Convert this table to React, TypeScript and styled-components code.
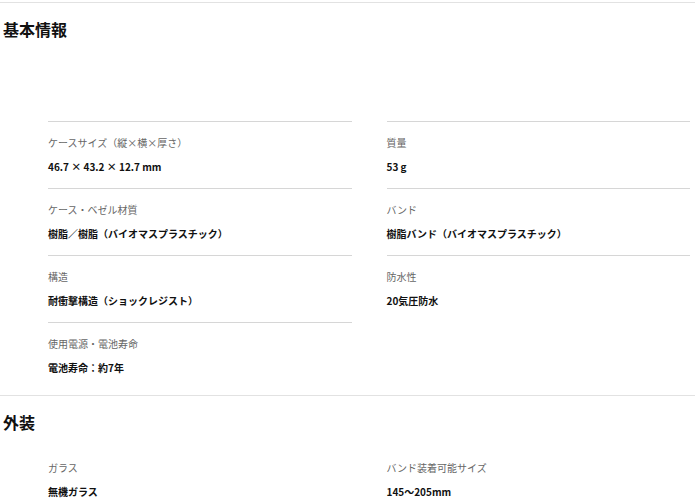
import styled, { createGlobalStyle } from "styled-components";

const GlobalStyle = createGlobalStyle`
  html, body {
    margin: 0;
    padding: 0;
    background: #fff;
  }
  body {
    font-family: "Noto Sans CJK JP", "Noto Sans", sans-serif;
    color: #111;
  }
`;

const Page = styled.div`
  width: 695px;
  padding-top: 2px;
`;

const Section = styled.section`
  border-top: 1px solid #e2e2e2;
  padding-bottom: 6px;
`;

const Heading = styled.h2`
  margin: 0;
  padding: 14px 0 0 3px;
  font-size: 16px;
  line-height: 24px;
  font-weight: 700;
  color: #111;
`;

const Grid = styled.dl<{ $top: number }>`
  margin: ${(p) => p.$top}px 0 0;
  padding: 0 5px 0 48px;
  display: grid;
  grid-template-columns: 1fr 1fr;
  column-gap: 35px;
`;

const Item = styled.div<{ $ruled?: boolean }>`
  border-top: 1px solid ${(p) => (p.$ruled ? "#d6d6d6" : "transparent")};
  padding: 13px 0 13px;
  display: flex;
  flex-direction: column;
  gap: 8px;
`;

const Label = styled.dt`
  margin: 0;
  font-size: 10px;
  line-height: 16px;
  color: #666;
`;

const Value = styled.dd`
  margin: 0;
  font-size: 10px;
  line-height: 16px;
  font-weight: 700;
  color: #111;
`;

type Spec = { label: string; value: string };

const basic: Spec[] = [
  { label: "ケースサイズ（縦×横×厚さ）", value: "46.7 × 43.2 × 12.7 mm" },
  { label: "質量", value: "53 g" },
  { label: "ケース・ベゼル材質", value: "樹脂／樹脂（バイオマスプラスチック）" },
  { label: "バンド", value: "樹脂バンド（バイオマスプラスチック）" },
  { label: "構造", value: "耐衝撃構造（ショックレジスト）" },
  { label: "防水性", value: "20気圧防水" },
  { label: "使用電源・電池寿命", value: "電池寿命：約7年" },
];

const exterior: Spec[] = [
  { label: "ガラス", value: "無機ガラス" },
  { label: "バンド装着可能サイズ", value: "145〜205mm" },
];

function SpecGrid({ items, top, ruled }: { items: Spec[]; top: number; ruled?: boolean }) {
  return (
    <Grid $top={top}>
      {items.map((s) => (
        <Item key={s.label} $ruled={ruled}>
          <Label>{s.label}</Label>
          <Value>{s.value}</Value>
        </Item>
      ))}
    </Grid>
  );
}

export default function App() {
  return (
    <Page>
      <GlobalStyle />
      <Section>
        <Heading>基本情報</Heading>
        <SpecGrid items={basic} top={80} ruled />
      </Section>
      <Section>
        <Heading>外装</Heading>
        <SpecGrid items={exterior} top={12} />
      </Section>
    </Page>
  );
}
